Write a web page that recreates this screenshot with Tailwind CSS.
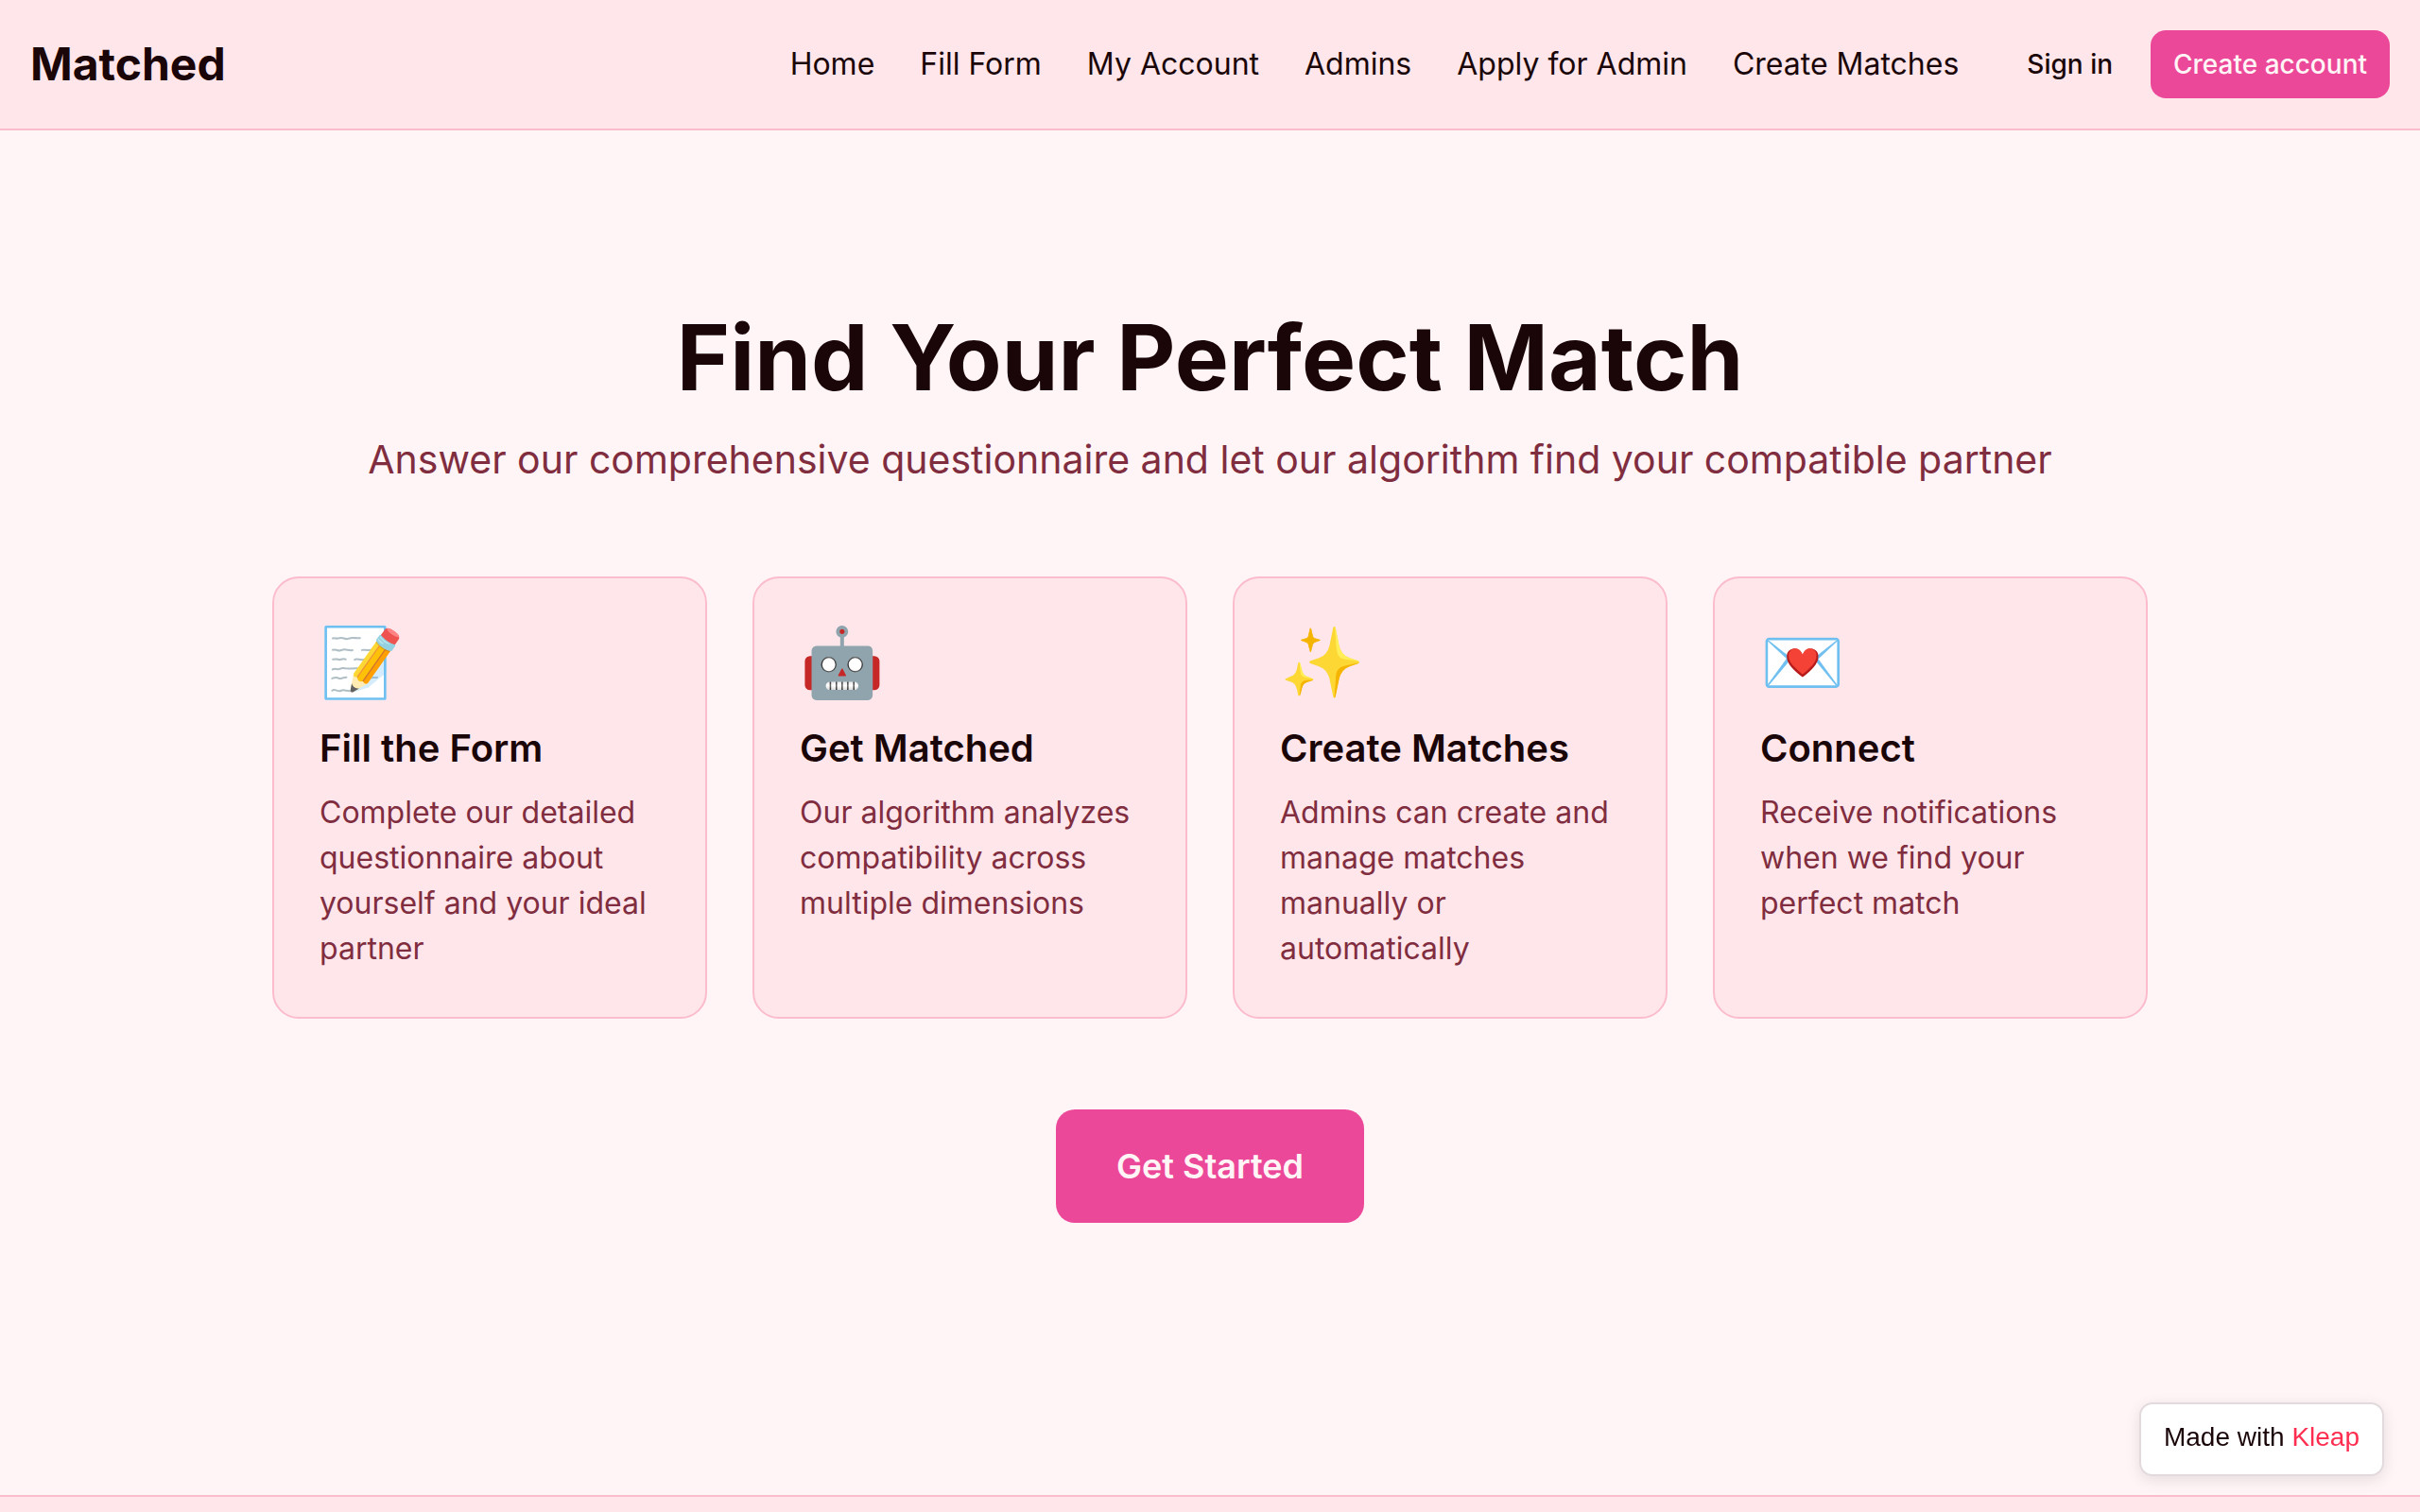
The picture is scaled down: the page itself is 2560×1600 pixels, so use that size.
<!DOCTYPE html>
<html lang="en">
<head>
    <meta charset="UTF-8">
    <meta name="viewport" content="width=device-width, initial-scale=1.0">
    <title>Matched</title>
    <script src="https://cdn.jsdelivr.net/npm/@tailwindcss/browser@4"></script>
</head>
<body class="bg-[#fff5f6] text-[#1a0508] font-['Inter',sans-serif] min-h-screen flex flex-col text-[32px]">
    <!-- Header -->
    <header class="bg-[#ffe6ea] border-b-2 border-[#fbbccd] px-8 py-8 flex items-center justify-between">
        <a href="#" class="text-[48px] leading-[64px] font-bold">Matched</a>
        <div class="flex items-center">
            <nav class="flex gap-12 leading-[48px]">
                <a href="#">Home</a>
                <a href="#">Fill Form</a>
                <a href="#">My Account</a>
                <a href="#">Admins</a>
                <a href="#">Apply for Admin</a>
                <a href="#">Create Matches</a>
            </nav>
            <button class="ml-12 px-6 h-[72px] text-[28px] font-medium rounded-2xl">Sign in</button>
            <button class="ml-4 px-6 h-[72px] text-[28px] font-medium text-[#fff5f6] bg-[#ec4899] rounded-2xl">Create account</button>
        </div>
    </header>

    <!-- Hero and steps -->
    <main class="flex-1 px-8 py-48">
        <div class="max-w-[1984px] mx-auto">
            <h1 class="text-[96px] leading-[96px] font-bold text-center">Find Your Perfect Match</h1>
            <p class="mt-8 text-[41px] leading-[56px] text-center text-[#7f2d3f]">Answer our comprehensive questionnaire and let our algorithm find your compatible partner</p>

            <div class="grid grid-cols-4 gap-12 mt-24">
                <section class="bg-[#ffe6ea] border-2 border-[#fbbccd] rounded-[28px] p-12">
                    <div class="text-[72px] leading-[80px]">📝</div>
                    <h2 class="mt-6 text-[40px] leading-[56px] font-semibold">Fill the Form</h2>
                    <p class="mt-4 leading-[48px] text-[#7f2d3f]">Complete our detailed questionnaire about yourself and your ideal partner</p>
                </section>
                <section class="bg-[#ffe6ea] border-2 border-[#fbbccd] rounded-[28px] p-12">
                    <div class="text-[72px] leading-[80px]">🤖</div>
                    <h2 class="mt-6 text-[40px] leading-[56px] font-semibold">Get Matched</h2>
                    <p class="mt-4 leading-[48px] text-[#7f2d3f]">Our algorithm analyzes compatibility across multiple dimensions</p>
                </section>
                <section class="bg-[#ffe6ea] border-2 border-[#fbbccd] rounded-[28px] p-12">
                    <div class="text-[72px] leading-[80px]">✨</div>
                    <h2 class="mt-6 text-[40px] leading-[56px] font-semibold">Create Matches</h2>
                    <p class="mt-4 leading-[48px] text-[#7f2d3f]">Admins can create and manage matches manually or automatically</p>
                </section>
                <section class="bg-[#ffe6ea] border-2 border-[#fbbccd] rounded-[28px] p-12">
                    <div class="text-[72px] leading-[80px]">💌</div>
                    <h2 class="mt-6 text-[40px] leading-[56px] font-semibold">Connect</h2>
                    <p class="mt-4 leading-[48px] text-[#7f2d3f]">Receive notifications when we find your perfect match</p>
                </section>
            </div>

            <div class="mt-24">
                <button class="block mx-auto px-16 py-8 text-[36px] leading-[56px] font-semibold text-[#fff5f6] bg-[#ec4899] rounded-[20px]">Get Started</button>
            </div>
        </div>
    </main>

    <footer class="bg-[#ffe6ea] border-t-2 border-[#fbbccd] pt-4"></footer>

    <!-- Badge -->
    <a href="#" class="fixed right-[38px] bottom-[38px] px-6 pt-4 pb-5 bg-white border-2 border-[#e2dadd] rounded-[14px] shadow-[0_4px_16px_rgba(0,0,0,0.1)] font-['Liberation_Sans',sans-serif] text-[28px] leading-[38px]">Made with <span class="text-[#ff2d50]">Kleap</span></a>
</body>
</html>
